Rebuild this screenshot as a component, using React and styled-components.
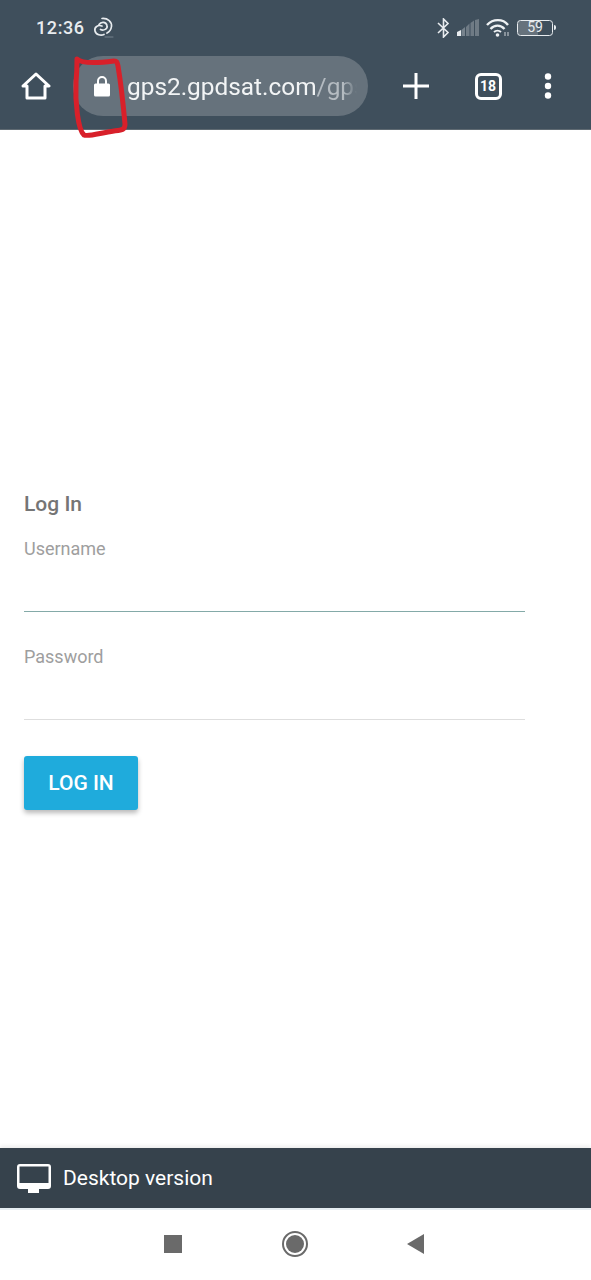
import React from "react";
import styled, { createGlobalStyle } from "styled-components";

const GlobalStyle = createGlobalStyle`
  html, body {
    margin: 0;
    padding: 0;
    background: #fff;
    font-family: Roboto, "Liberation Sans", sans-serif;
  }
`;

const Screen = styled.div`
  position: relative;
  width: 591px;
  height: 1280px;
  display: flex;
  flex-direction: column;
  overflow: hidden;
  background: #fff;
`;

const Header = styled.header`
  height: 129px;
  flex: none;
  background: #3f4f5c;
  border-bottom: 1px solid #5f6a72;
  display: flex;
  flex-direction: column;
`;

const StatusBar = styled.div`
  height: 55px;
  padding: 0 35px 0 36px;
  display: flex;
  align-items: center;
  justify-content: space-between;
  color: #e8ecef;
`;

const StatusGroup = styled.div`
  display: flex;
  align-items: center;
  gap: ${(p) => p.$gap || 8}px;
`;

const Clock = styled.span`
  font-size: 18px;
  font-weight: 500;
  letter-spacing: 0.6px;
`;

const Toolbar = styled.div`
  height: 60px;
  margin-top: 1px;
  padding-left: 20px;
  display: flex;
  align-items: center;
`;

const ToolButton = styled.div`
  flex: none;
  width: ${(p) => p.$w}px;
  margin-left: ${(p) => p.$ml || 0}px;
  display: flex;
  align-items: center;
  justify-content: center;
`;

const UrlPill = styled.div`
  width: 295px;
  height: 60px;
  margin-left: 21px;
  flex: none;
  box-sizing: border-box;
  padding: 0 11px 0 20px;
  border-radius: 30px;
  background: #66727c;
  display: flex;
  align-items: center;
  gap: 16px;
`;

const UrlClip = styled.div`
  flex: 1;
  overflow: hidden;
  white-space: nowrap;
  font-size: 24.4px;
  color: #f2f4f5;
  -webkit-mask-image: linear-gradient(to right, #000 94%, transparent);
  mask-image: linear-gradient(to right, #000 94%, transparent);
`;

const UrlPath = styled.span`
  color: #b4bbc1;
`;

const Main = styled.main`
  flex: 1;
  padding: 361px 24px 0;
  display: flex;
  flex-direction: column;
  align-items: flex-start;
`;

const Title = styled.h1`
  margin: 0 0 20px;
  font-size: 21px;
  line-height: 26px;
  font-weight: 500;
  color: #757575;
`;

const Field = styled.label`
  display: block;
  width: 501px;
  height: 75px;
  box-sizing: border-box;
  margin-bottom: ${(p) => p.$mb}px;
  border-bottom: 1px solid ${(p) => p.$line};
  font-size: 18px;
  line-height: 24px;
  color: #9e9e9e;
`;

const Button = styled.button`
  width: 114px;
  height: 54px;
  padding: 0;
  border: 0;
  border-radius: 3px;
  background: #1fabdc;
  color: #fff;
  font-family: inherit;
  font-size: 21px;
  font-weight: 500;
  box-shadow: 0 3px 5px rgba(0, 0, 0, 0.28);
`;

const DesktopBar = styled.div`
  height: 62px;
  flex: none;
  box-sizing: border-box;
  padding-left: 17px;
  background: #36424c;
  border-bottom: 2px solid #e6eef2;
  box-shadow: 0 -2px 4px rgba(0, 0, 0, 0.08);
  display: flex;
  align-items: center;
  gap: 12px;
  color: #fff;
  font-size: 21px;
`;

const NavBar = styled.nav`
  height: 70px;
  flex: none;
  background: #fff;
  display: flex;
  align-items: center;
  padding-left: 164px;
  padding-bottom: 2px;
  box-sizing: border-box;
`;

const NavSquare = styled.div`
  width: 18px;
  height: 18px;
  background: #6a6a6a;
`;

const NavHome = styled.div`
  width: 26px;
  height: 26px;
  box-sizing: border-box;
  margin-left: 100px;
  border: 2px solid #6a6a6a;
  border-radius: 50%;
  padding: 2px;
  background: #6a6a6a content-box;
`;

const NavBack = styled.div`
  width: 0;
  height: 0;
  margin-left: 99px;
  border-style: solid;
  border-width: 10px 17px 10px 0;
  border-color: transparent #6a6a6a transparent transparent;
`;

const Annotation = styled.svg`
  position: absolute;
  left: 70px;
  top: 52px;
  pointer-events: none;
`;

const HotspotIcon = () => (
  <svg width="22" height="22" viewBox="0 0 22 22" fill="none" stroke="#e8ecef" strokeWidth="1.7" strokeLinecap="round">
    <path d="M9 1.500C15 1 19 5 18.500 9.500 18 13 16 15 14 16" />
    <path d="M6 7.500C8 4.500 13 4.500 14 8.500 15 12 10.500 14 7.500 12.500" />
    <path d="M9 9C5 7.500 1 10 2 14 3 18 8 19 11 17.500" />
    <path d="M12 20h8" strokeWidth="1" stroke="#77838d" />
  </svg>
);

const BluetoothIcon = () => (
  <svg width="13" height="20" viewBox="0 0 13 20" fill="none" stroke="#e8ecef" strokeWidth="1.6">
    <path d="M1 5l10 9.500L6.500 19V1L11 5.500 1 15" />
  </svg>
);

const SignalIcon = () => (
  <svg width="22" height="17" viewBox="0 0 22 17">
    <path d="M0 13l4-2v6H0z" fill="#e8ecef" />
    <path d="M4.500 11l3.500-3v9H4.500z" fill="#77838d" />
    <path d="M9 8l3.500-3.500V17H9z" fill="#6f7b85" />
    <path d="M13.500 4L17 1.500V17h-3.500z" fill="#6f7b85" />
    <path d="M18 1l4-1v17h-4z" fill="#6f7b85" />
  </svg>
);

const WifiIcon = () => (
  <svg width="24" height="19" viewBox="0 0 24 19" fill="none" stroke="#eef1f3" strokeWidth="2.400">
    <path d="M1 7c6-6.500 16-6.500 21 0" />
    <path d="M4.500 11c4-4.500 10-4.500 14 0" />
    <path d="M8 14c2-1.800 5-1.800 7 0" strokeWidth="2" />
    <circle cx="11.500" cy="17" r="1.800" fill="#eef1f3" stroke="none" />
    <path d="M19 14v4M22 14v4" strokeWidth="1.300" stroke="#aeb6bc" />
  </svg>
);

const BatteryBody = styled.div`
  width: 36px;
  height: 16px;
  box-sizing: border-box;
  border: 1.5px solid #e8ecef;
  border-radius: 3.5px;
  font-size: 14px;
  line-height: 13px;
  text-align: center;
  color: #e8ecef;
  background: linear-gradient(to right, #66727c 58%, transparent 58%) content-box;
`;

const BatteryTip = styled.div`
  width: 2px;
  height: 5px;
  margin-left: 1px;
  background: #e8ecef;
  border-radius: 0 2px 2px 0;
`;

const Battery = styled.div`
  display: flex;
  align-items: center;
`;

const HomeIcon = () => (
  <svg width="30" height="30" viewBox="0 0 30 30" fill="none" stroke="#fff" strokeWidth="3" strokeLinejoin="round">
    <path d="M2 15 15 3l13 12h-4v12H6V15z" />
  </svg>
);

const LockIcon = () => (
  <svg width="18" height="22" viewBox="0 0 18 22">
    <path d="M5 9V6a4 4 0 0 1 8 0v3" fill="none" stroke="#fff" strokeWidth="2" />
    <rect x="1" y="8.500" width="16" height="13" rx="1.500" fill="#fff" />
  </svg>
);

const PlusIcon = () => (
  <svg width="26" height="26" viewBox="0 0 26 26" stroke="#fff" strokeWidth="3">
    <path d="M0 13h26M13 0v26" />
  </svg>
);

const TabCount = styled.div`
  width: 27px;
  height: 27px;
  box-sizing: border-box;
  border: 3px solid #fff;
  border-radius: 6px;
  color: #fff;
  font-size: 14px;
  font-weight: 700;
  line-height: 21px;
  text-align: center;
`;

const MenuIcon = () => (
  <svg width="10" height="26" viewBox="0 0 10 26" fill="#fff">
    <circle cx="5" cy="3.500" r="3.200" />
    <circle cx="5" cy="13" r="3.200" />
    <circle cx="5" cy="22.500" r="3.200" />
  </svg>
);

const MonitorIcon = () => (
  <svg width="34" height="29" viewBox="0 0 34 29" fill="#fff">
    <path
      fillRule="evenodd"
      d="M3 0h28a3 3 0 0 1 3 3v19a3 3 0 0 1-3 3H3a3 3 0 0 1-3-3V3a3 3 0 0 1 3-3zm-.500 2.500V19h29V2.500z"
    />
    <rect x="11" y="25" width="11" height="4" />
  </svg>
);

export default function App() {
  return (
    <Screen>
      <GlobalStyle />
      <Header>
        <StatusBar>
          <StatusGroup>
            <Clock>12:36</Clock>
            <HotspotIcon />
          </StatusGroup>
          <StatusGroup $gap={7}>
            <BluetoothIcon />
            <SignalIcon />
            <WifiIcon />
            <Battery>
              <BatteryBody>59</BatteryBody>
              <BatteryTip />
            </Battery>
          </StatusGroup>
        </StatusBar>
        <Toolbar>
          <ToolButton $w={32}>
            <HomeIcon />
          </ToolButton>
          <UrlPill>
            <LockIcon />
            <UrlClip>
              gps2.gpdsat.com<UrlPath>/gps</UrlPath>
            </UrlClip>
          </UrlPill>
          <ToolButton $w={26} $ml={35}>
            <PlusIcon />
          </ToolButton>
          <ToolButton $w={32} $ml={43}>
            <TabCount>18</TabCount>
          </ToolButton>
          <ToolButton $w={10} $ml={39}>
            <MenuIcon />
          </ToolButton>
        </Toolbar>
      </Header>
      <Main>
        <Title>Log In</Title>
        <Field $mb={33} $line="#84aaa8">Username</Field>
        <Field $mb={36} $line="#dedede">Password</Field>
        <Button>LOG IN</Button>
      </Main>
      <DesktopBar>
        <MonitorIcon />
        Desktop version
      </DesktopBar>
      <NavBar>
        <NavSquare />
        <NavHome />
        <NavBack />
      </NavBar>
      <Annotation width="60" height="90" viewBox="0 0 60 90" fill="none" stroke="#d8202a" strokeWidth="5" strokeLinecap="round" strokeLinejoin="round">
        <path d="M7 7C12 12 28 11 44 9 47 9 47 10 48 14 50 26 53 50 55 72 55 78 52 78 44 79 30 81 18 85 14 83 8 78 5 50 6 30 7 20 7 12 7 7z" />
      </Annotation>
    </Screen>
  );
}
